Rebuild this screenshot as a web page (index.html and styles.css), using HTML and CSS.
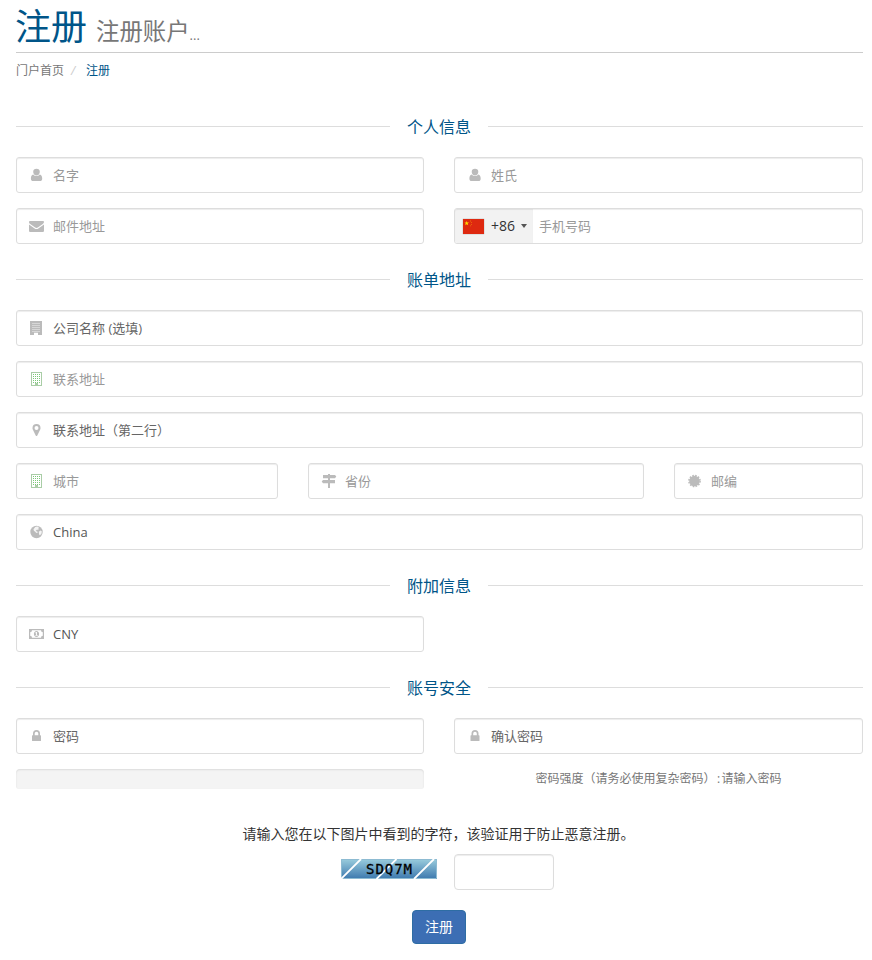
FILE: index.html
```
<!DOCTYPE html>
<html lang="zh-CN">
<head>
<meta charset="utf-8">
<title>注册</title>
<link rel="stylesheet" href="styles.css">
</head>
<body>
<svg class="sprite" aria-hidden="true">
  <symbol id="user" viewBox="0 0 16 16"><path d="M7.500 1.700a3.300 3.300 0 0 1 3.300 3.300c0 1.900-1.500 3.500-3.300 3.500S4.200 6.900 4.200 5A3.300 3.300 0 0 1 7.500 1.700zM4.300 7.400C5.200 8.400 6.200 9 7.500 9s2.300-.6 3.200-1.600c1.900.3 2.500 2.200 2.500 4.300 0 1.500-.9 2.300-2.200 2.300H4.100C2.800 14 1.900 13.200 1.900 11.700c0-2.100.5-4 2.400-4.300z"/></symbol>
  <symbol id="mail" viewBox="0 0 16 16"><path d="M1.200 3h12.600c.8 0 1.200.5 1.200 1.100 0 .8-.6 1.500-1.200 1.900L9.200 9.200c-.7.500-1.200.8-1.700.8s-1-.3-1.700-.8L1.200 6C.6 5.600 0 4.900 0 4.200 0 3.500.4 3 1.200 3zM0 6.500l5.300 3.700c.8.600 1.500.9 2.200.9s1.400-.3 2.200-.9L15 6.500v6.200c0 .7-.6 1.300-1.300 1.300H1.300C.6 14 0 13.400 0 12.700z"/></symbol>
  <symbol id="building" viewBox="0 0 16 16"><path d="M1 1h12v14H9v-2.200H5V15H1z"/><path class="windows" d="M3 3.500h8M3 5.500h8M3 7.500h8M3 9.500h8M3 11.500h8"/></symbol>
  <symbol id="office" viewBox="0 0 16 16"><path fill-rule="evenodd" d="M2 1h11v14H2zM3 2v12h3v-2h3v2h3V2z"/><path class="dots" d="M4 3.500h8M4 5.500h8M4 7.500h8M4 9.500h8M4 11.500h8"/></symbol>
  <symbol id="marker" viewBox="0 0 16 16"><path fill-rule="evenodd" d="M7.500 2a4 4 0 0 1 4 4c0 .7-.1 1.200-.4 1.700l-2.800 5.800c-.3.700-1.300.7-1.600 0L3.900 7.700C3.600 7.200 3.500 6.700 3.500 6a4 4 0 0 1 4-4zm0 2a2 2 0 1 0 0 4 2 2 0 0 0 0-4z"/></symbol>
  <symbol id="signs" viewBox="0 0 16 16"><path d="M7 1h2v1h5l1.300 1.500L14 5.200H2V2h5zM7 5h2v2h5v3.200H9V15H7v-4.800H2L.7 8.500 2 7h5z"/></symbol>
  <symbol id="seal" viewBox="0 0 16 16"><circle cx="7.500" cy="8" r="5.300"/><circle class="teeth" cx="7.500" cy="8" r="5.600"/></symbol>
  <symbol id="globe" viewBox="0 0 16 16"><circle cx="7.500" cy="8" r="6.200"/><path class="land" d="M6.200 3.100l2-.7 1.700.6-.7 1.200.8.700-1 .8-1.300.1-.9 1.200 1.500.5.600 1.100-1.500.3-1.200-1.200-1.300-1L4.500 5.200zM9.800 7.800l1.700-1.400 1.400 1.200-.6 2.600-1.900 1-.4-1.500z"/></symbol>
  <symbol id="money" viewBox="0 0 16 16"><path fill-rule="evenodd" d="M0 3h15v10H0zM3 4.200a2 2 0 0 1-1.800 2v3.600a2 2 0 0 1 1.800 2h9a2 2 0 0 1 1.800-2V6.200a2 2 0 0 1-1.800-2z"/><path fill-rule="evenodd" d="M7.500 5c1.600 0 2.600 1.400 2.600 3s-1 3-2.600 3-2.600-1.400-2.600-3 1-3 2.600-3zM7.200 6l-1 .8.400.6.500-.3V9h-.7v.8h2.300V9H8V6z"/></symbol>
  <symbol id="lock" viewBox="0 0 16 16"><path fill-rule="evenodd" d="M4 7.200V5.500a3.500 3.500 0 0 1 7 0v1.700h.4c.4 0 .6.300.6.600v4.600c0 .4-.2.600-.6.600H3.600c-.4 0-.6-.2-.6-.6V7.800c0-.3.200-.6.600-.6zm1.700 0h3.600V5.500a1.800 1.800 0 0 0-3.600 0z"/></symbol>
</svg>
<main class="page">
  <h1 class="title">注册<small>注册账户<span>...</span></small></h1>
  <nav class="crumbs"><a>门户首页</a><i>/</i><b>注册</b></nav>

  <form>
    <h2 class="section">个人信息</h2>
    <div class="row halves">
      <label class="field"><svg class="icon"><use href="#user"/></svg><input placeholder="名字"></label>
      <label class="field"><svg class="icon"><use href="#user" x=".5"/></svg><input placeholder="姓氏"></label>
    </div>
    <div class="row halves">
      <label class="field"><svg class="icon"><use href="#mail"/></svg><input placeholder="邮件地址"></label>
      <div class="field phone">
        <div class="dial">
          <svg class="flag" viewBox="0 0 21 15"><rect width="21" height="15" fill="#de2910"/><path d="M3.700 1.900l.6 1.600H6L4.700 4.600l.5 1.700-1.500-1-1.500 1 .5-1.700-1.300-1.100h1.700z" fill="#ffde00"/><path d="M7 1.500h1v1H7zM8.200 3h.8v1h-.8zM8.200 5h.8v1h-.8zM7 6.500h1v.8H7z" fill="#ef7209"/></svg>
          <span>+86</span><svg class="caret" viewBox="0 0 6 4"><path d="M0 0h6L3 4z"/></svg>
        </div>
        <input placeholder="手机号码">
      </div>
    </div>

    <h2 class="section">账单地址</h2>
    <div class="row"><label class="field dark"><svg class="icon"><use href="#building"/></svg><input placeholder="公司名称 (选填)"></label></div>
    <div class="row"><label class="field"><svg class="icon office"><use href="#office"/></svg><input placeholder="联系地址"></label></div>
    <div class="row"><label class="field dark"><svg class="icon"><use href="#marker"/></svg><input placeholder="联系地址（第二行）"></label></div>
    <div class="row thirds">
      <label class="field"><svg class="icon office"><use href="#office"/></svg><input placeholder="城市"></label>
      <label class="field"><svg class="icon"><use href="#signs"/></svg><input placeholder="省份"></label>
      <label class="field"><svg class="icon"><use href="#seal"/></svg><input placeholder="邮编"></label>
    </div>
    <div class="row"><label class="field"><svg class="icon"><use href="#globe"/></svg><span class="value">China</span></label></div>

    <h2 class="section">附加信息</h2>
    <div class="row halves"><label class="field"><svg class="icon"><use href="#money"/></svg><span class="value">CNY</span></label></div>

    <h2 class="section">账号安全</h2>
    <div class="row halves">
      <label class="field dark"><svg class="icon"><use href="#lock"/></svg><input placeholder="密码"></label>
      <label class="field dark"><svg class="icon"><use href="#lock" x=".5"/></svg><input placeholder="确认密码"></label>
    </div>
    <div class="row halves">
      <div class="meter"></div>
      <p class="strength">密码强度（请务必使用复杂密码）<span>:</span>请输入密码</p>
    </div>

    <p class="hint">请输入您在以下图片中看到的字符，该验证用于防止恶意注册。</p>
    <div class="captcha">
      <svg class="code" viewBox="0 0 96 20">
        <defs><linearGradient id="sky" x2="0" y2="1"><stop offset="0" stop-color="#9acddd"/><stop offset="1" stop-color="#3c78ae"/></linearGradient></defs>
        <rect width="96" height="20" fill="url(#sky)"/>
        <path d="M.5 20V.5H96M95.500 0v19.500H0" fill="none" stroke="#8dbbd2"/>
        <path d="M0 20L20 0M35.500 20l20-20M73 20L93 0" stroke="#fff" stroke-width="1.800"/>
        <text x="25" y="15" textLength="46">SDQ7M</text>
      </svg>
      <input class="answer" aria-label="验证码">
    </div>
    <button class="submit" type="button">注册</button>
  </form>
</main>
</body>
</html>
```
FILE: styles.css
```
* { box-sizing: border-box; }

body {
  margin: 0;
  background: #fff;
  color: #333;
  font: 14px/20px "Open Sans", "Noto Sans CJK SC", sans-serif;
}

.sprite { display: none; }

.page {
  width: 847px;
  height: 960px;
  margin-left: 16px;
  overflow: hidden;
}

.title {
  height: 53px;
  margin: 0;
  border-bottom: 1px solid #ccc;
  color: #058;
  font-size: 36px;
  font-weight: 400;
  line-height: 53px;
  white-space: nowrap;
  text-indent: -1px;
}

.title small {
  margin-left: 9px;
  color: #777;
  font-size: 23.400px;
}

.title span {
  font-size: 13px;
}

.crumbs {
  display: flex;
  height: 34px;
  color: #777;
  font-size: 12px;
  line-height: 36px;
}

.crumbs i {
  width: 22px;
  padding-left: 7px;
  color: #ccc;
}

.crumbs b {
  color: #058;
  font-weight: 400;
}

.section {
  display: flex;
  align-items: center;
  height: 20px;
  margin: 26px 0 20px;
  color: #058;
  font-size: 16px;
  font-weight: 400;
  line-height: 20px;
}

.crumbs + form .section:first-child { margin-top: 30px; }

.section::before,
.section::after {
  content: "";
  height: 1px;
  margin-bottom: 1px;
  background: #ddd;
}

.section::before {
  width: 374px;
  margin-right: 17px;
}

.section::after {
  flex: 1;
  margin-left: 17px;
}

.row {
  display: grid;
  column-gap: 30px;
  margin-bottom: 15px;
}

.halves { grid-template-columns: 408px 409px; }
.thirds { grid-template-columns: 262px 336px 189px; }

.field {
  display: flex;
  align-items: center;
  height: 36px;
  padding-left: 12px;
  border: 1px solid #ddd;
  border-radius: 3px;
  box-shadow: inset 0 1px 1px rgba(0, 0, 0, .075);
}

.icon {
  flex: none;
  width: 16px;
  height: 16px;
  margin-right: 8px;
  fill: #bbb;
}

.office { fill: #a9cda6; }

.windows {
  stroke: #ddd;
  stroke-width: .8;
}

.dots {
  stroke: #7cc878;
  stroke-dasharray: 1 1;
}

.teeth {
  fill: none;
  stroke: #bbb;
  stroke-width: 1.500;
  stroke-dasharray: 1.600 1.332;
}

.land { fill: #f4f4f4; }

.field input {
  flex: 1;
  min-width: 0;
  height: 34px;
  padding: 0 0 1px;
  border: 0;
  outline: 0;
  background: transparent;
  color: #555;
  font: inherit;
  font-size: 13px;
}

.field input::placeholder {
  color: #999;
  opacity: 1;
}

.dark input::placeholder { color: #666; }

.value {
  color: #555;
  font-size: 13px;
}

.phone { padding-left: 0; }

.dial {
  display: flex;
  align-items: center;
  width: 78px;
  height: 34px;
  margin-right: 6px;
  padding-left: 8px;
  border-radius: 2px 0 0 2px;
  background: #f2f2f2;
  box-shadow: inset 0 1px 1px rgba(0, 0, 0, .075);
}

.flag {
  width: 21px;
  height: 15px;
  margin-right: 7px;
  box-shadow: 0 0 1px #888;
}

.caret {
  width: 6px;
  height: 4px;
  margin-left: 6px;
  fill: #555;
}

.meter {
  height: 20px;
  border-radius: 4px 4px 3px 3px;
  background: #f4f4f4;
  box-shadow: inset 0 1px 2px rgba(0, 0, 0, .1);
}

.strength {
  height: 20px;
  margin: 0;
  color: #777;
  font-size: 12px;
  line-height: 20px;
  text-align: center;
}

.strength span {
  display: inline-block;
  width: 6px;
}

.hint {
  margin: 35px 2px 10px 0;
  text-align: center;
}

.captcha {
  display: flex;
  gap: 17px;
  height: 36px;
  margin-left: 325px;
}

.code {
  width: 96px;
  height: 20px;
  margin-top: 5px;
}

.code text {
  fill: #000;
  stroke: #000;
  stroke-width: .3;
  font: 14px "DejaVu Sans Mono", monospace;
}

.answer {
  width: 100px;
  height: 36px;
  border: 1px solid #ddd;
  border-radius: 4px;
  outline: 0;
  box-shadow: inset 0 1px 1px rgba(0, 0, 0, .075);
}

.submit {
  display: block;
  width: 54px;
  height: 34px;
  margin: 20px 0 0 396px;
  padding: 0;
  border: 1px solid #2e6da4;
  border-radius: 4px;
  background: #3c6eb4;
  color: #fff;
  font: inherit;
}
```
